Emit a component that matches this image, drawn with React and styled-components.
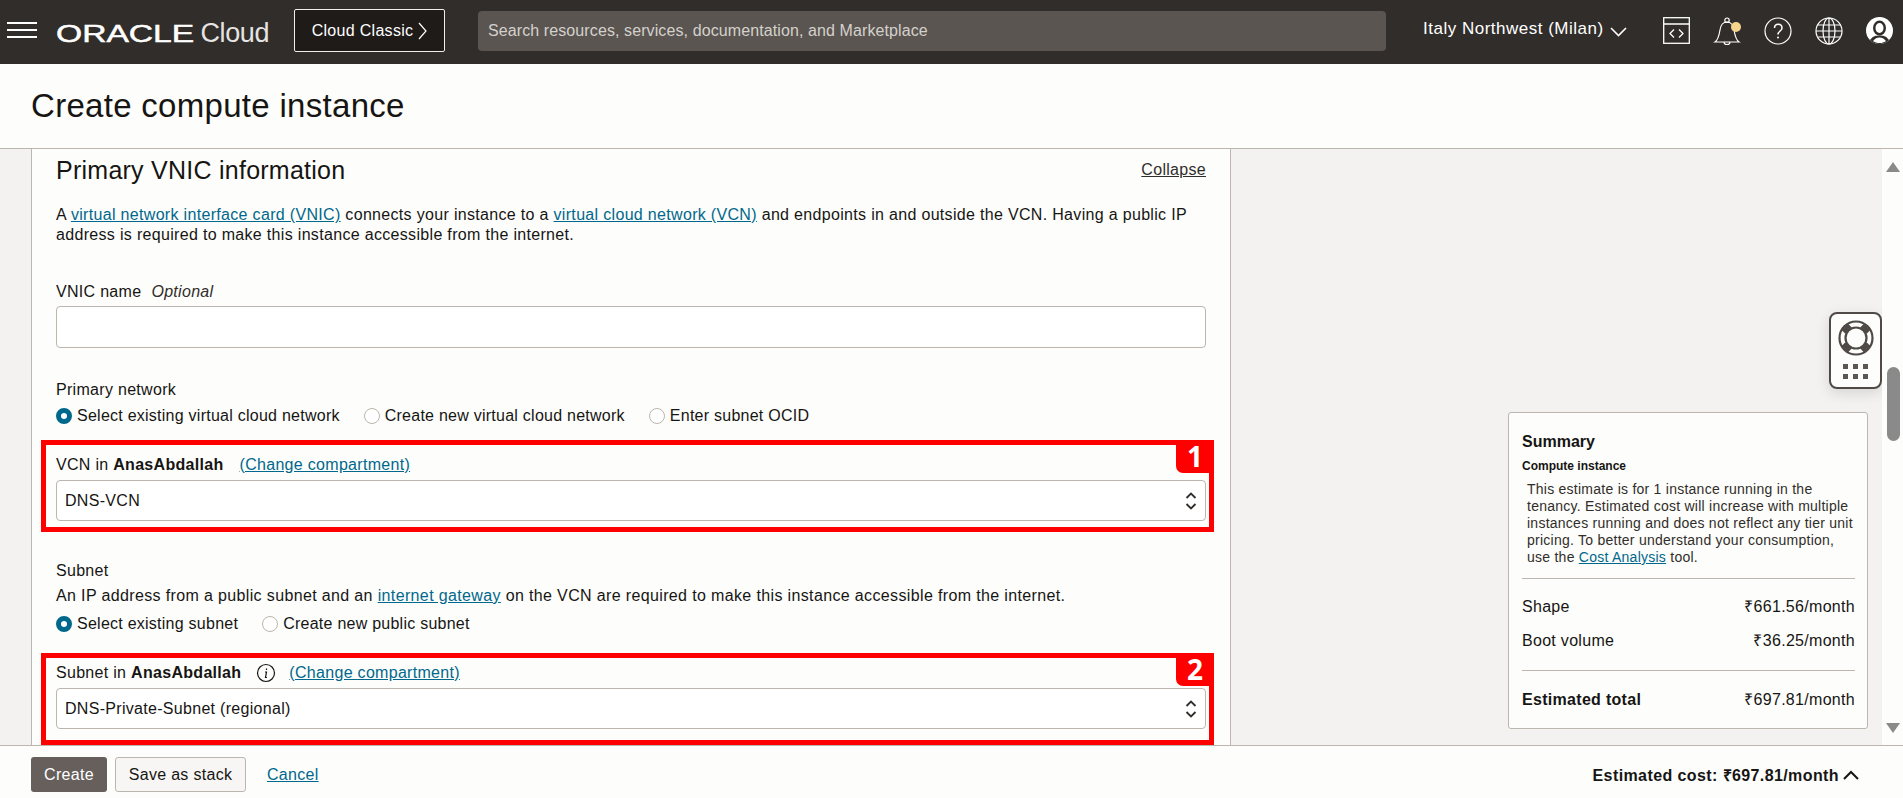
import styled, { createGlobalStyle } from 'styled-components';

const GlobalStyle = createGlobalStyle`
  html, body {
    margin: 0;
    padding: 0;
    height: 100%;
    overflow: hidden;
    background: #fdfdfb;
  }
  body {
    font-family: "Liberation Sans", Arial, sans-serif;
    font-size: 16px;
    letter-spacing: 0.3px;
    color: #161513;
  }
  * { box-sizing: border-box; }
`;

const Page = styled.div`
  width: 1903px;
  height: 798px;
  display: flex;
  flex-direction: column;
  overflow: hidden;
`;

const Header = styled.header`
  height: 64px;
  flex: none;
  background: #312d2a;
  display: flex;
  align-items: center;
  color: #fff;
`;

const MenuButton = styled.svg`
  width: 30px;
  height: 16px;
  margin: 0 0 4px 7px;
  flex: none;
`;

const Logo = styled.div`
  margin: 3px 0 0 19px;
  width: 213px;
  display: flex;
  align-items: baseline;
  white-space: nowrap;
`;

const LogoMark = styled.span`
  display: inline-block;
  width: 139px;
  font-size: 24px;
  letter-spacing: 0;
  transform: scaleX(1.4);
  transform-origin: left center;
  -webkit-text-stroke: 0.5px #fff;
`;

const LogoCloud = styled.span`
  margin-left: 7px;
  font-size: 27px;
  letter-spacing: -0.4px;
  color: #e6e4e2;
`;

const ClassicButton = styled.button`
  margin: 0 0 3px 25px;
  width: 151px;
  height: 43px;
  background: #1e1b18;
  border: 1px solid #f0eeec;
  border-radius: 2px;
  color: #fff;
  font: 400 16px "Liberation Sans", Arial, sans-serif;
  letter-spacing: 0.3px;
  display: flex;
  align-items: center;
  justify-content: center;
  gap: 5px;
`;

const SearchBox = styled.div`
  margin: 0 0 2px 33px;
  width: 908px;
  height: 40px;
  background: #5a5550;
  border-radius: 4px;
  padding-left: 10px;
  display: flex;
  align-items: center;
  letter-spacing: 0.1px;
  color: #d4d1cd;
`;

const Region = styled.div`
  margin-left: 37px;
  display: flex;
  align-items: center;
  gap: 6px;
  white-space: nowrap;
`;

const RegionName = styled.span`
  margin-bottom: 6px;
  font-size: 17px;
  letter-spacing: 0.5px;
`;

const HeaderIcons = styled.div`
  margin: 0 0 3px 36px;
  display: flex;
  align-items: center;
  gap: 23px;
`;

const TitleBar = styled.div`
  height: 85px;
  flex: none;
  border-bottom: 1px solid #bcb6ae;
  padding-left: 31px;
  display: flex;
  align-items: center;
`;

const Title = styled.h1`
  margin: 0;
  font-size: 33px;
  font-weight: 400;
  letter-spacing: 0.3px;
  line-height: 40px;
`;

const Body = styled.div`
  flex: 1;
  display: flex;
  min-height: 0;
  background: #f3f2f0;
  padding-left: 31px;
`;

const Panel = styled.main`
  width: 1200px;
  flex: none;
  background: #fdfdfb;
  border-left: 1px solid #bcb6ae;
  border-right: 1px solid #bcb6ae;
  padding: 7px 24px 0;
  position: relative;
`;

const SectionHead = styled.div`
  display: flex;
  justify-content: space-between;
  align-items: center;
  height: 28px;
  margin-bottom: 21px;
`;

const SectionTitle = styled.h2`
  margin: 0;
  font-size: 25px;
  font-weight: 400;
  letter-spacing: 0.25px;
`;

const TextLink = styled.a`
  color: #00688c;
  text-decoration: underline;
`;

const CollapseLink = styled.a`
  color: #312d2a;
  text-decoration: underline;
`;

const Paragraph = styled.p`
  margin: 0;
  line-height: 20px;
  letter-spacing: 0.32px;
  white-space: nowrap;
`;

const Label = styled.div`
  display: flex;
  align-items: center;
  line-height: 20px;
  margin-top: ${props => props.$top || 0}px;
`;

const HelpLine = styled.p`
  margin: 5px 0 0;
  line-height: 20px;
  letter-spacing: 0.36px;
  white-space: nowrap;
`;

const Optional = styled.i`
  margin-left: 10px;
  color: #312d2a;
`;

const TextInput = styled.div`
  height: 42px;
  margin-top: 4px;
  border: 1px solid #bcb6ae;
  border-radius: 4px;
  background: #fff;
`;

const RadioRow = styled.div`
  display: flex;
  align-items: center;
  gap: 24px;
  margin-top: ${props => props.$top || 0}px;
  height: 20px;
`;

const RadioItem = styled.label`
  display: flex;
  align-items: center;
  gap: 5px;
  letter-spacing: 0.25px;
`;

const RadioDot = styled.span`
  width: 16px;
  height: 16px;
  border-radius: 50%;
  flex: none;
  background: #fff;
  border: ${props => (props.$on ? '5px solid #00688c' : '1px solid #bcb6ae')};
`;

const Marked = styled.section`
  position: relative;
  z-index: 5;
  margin: ${props => props.$top}px -8px 0 -15px;
  height: 92px;
  border: 5px solid #ff0000;
  padding: ${props => props.$pad}px 3px 0 10px;
`;

const Badge = styled.span`
  position: absolute;
  top: -5px;
  right: -5px;
  width: 38px;
  height: 33px;
  background: #ff0000;
  border-bottom-left-radius: 7px;
  color: #fff;
  font: 700 28px/33px "Open Sans", "Liberation Sans", sans-serif;
  letter-spacing: 0;
  text-align: center;
`;

const MarkedLabel = styled(Label)`
  margin-right: 40px;
`;

const ChangeLink = styled(TextLink)`
  margin-left: ${props => props.$left}px;
`;

const InfoIcon = styled.svg`
  margin-left: 15px;
  width: 20px;
  height: 20px;
`;

const SelectBox = styled.div`
  height: 41px;
  margin-top: ${props => props.$top}px;
  border: 1px solid #bcb6ae;
  border-radius: 4px;
  background: #fff;
  padding: 0 8px;
  display: flex;
  align-items: center;
  justify-content: space-between;
`;

const Rail = styled.aside`
  flex: 1;
  position: relative;
  display: flex;
  justify-content: flex-end;
  align-items: flex-end;
  padding: 0 14px 16px 0;
`;

const HelpWidget = styled.div`
  position: absolute;
  top: 163px;
  right: 0;
  width: 53px;
  height: 77px;
  background: #fdfdfb;
  border: 2px solid #4f4a45;
  border-radius: 8px;
  box-shadow: 0 4px 14px rgba(0, 0, 0, 0.12);
  display: flex;
  flex-direction: column;
  align-items: center;
  padding-top: 6px;
  gap: 8px;
`;

const DotGrid = styled.div`
  display: grid;
  grid-template-columns: repeat(3, 5px);
  gap: 5px;
`;

const Dot = styled.span`
  width: 5px;
  height: 5px;
  background: #5a5651;
`;

const SummaryCard = styled.div`
  width: 360px;
  height: 317px;
  background: #fdfdfb;
  border: 1px solid #bcb6ae;
  border-radius: 3px;
  padding: 19px 12px 0 13px;
`;

const SummaryTitle = styled.div`
  font-size: 16px;
  font-weight: 700;
  letter-spacing: 0;
  line-height: 20px;
`;

const SummarySub = styled.div`
  font-size: 12px;
  font-weight: 700;
  letter-spacing: 0;
  line-height: 16px;
  margin-top: 6px;
`;

const SummaryText = styled.p`
  margin: 7px 0 0 5px;
  font-size: 14px;
  letter-spacing: 0.25px;
  line-height: 17px;
  color: #312d2a;
`;

const Divider = styled.hr`
  margin: ${props => props.$top}px 0 0;
  border: 0;
  border-top: 1px solid #bcb6ae;
`;

const CostRow = styled.div`
  display: flex;
  justify-content: space-between;
  line-height: 20px;
  margin-top: ${props => props.$top}px;
`;

const CostName = styled.span`
  font-weight: ${props => (props.$bold ? 700 : 400)};
`;

const Scrollbar = styled.div`
  width: 21px;
  flex: none;
  background: #fdfdfb;
  position: relative;
`;

const ScrollArrow = styled.span`
  position: absolute;
  left: 4px;
  ${props => (props.$down ? 'bottom: 12px;' : 'top: 13px;')}
  width: 0;
  height: 0;
  border-left: 7.5px solid transparent;
  border-right: 7.5px solid transparent;
  ${props => (props.$down ? 'border-top: 10px solid #8a8a8a;' : 'border-bottom: 10px solid #8a8a8a;')}
`;

const ScrollThumb = styled.span`
  position: absolute;
  left: 5px;
  top: 218px;
  width: 13px;
  height: 74px;
  border-radius: 7px;
  background: #8a8a8a;
`;

const Footer = styled.footer`
  height: 53px;
  flex: none;
  border-top: 1px solid #bcb6ae;
  background: #fdfdfb;
  padding: 5px 44px 0 31px;
  display: flex;
  align-items: center;
`;

const PrimaryButton = styled.button`
  width: 76px;
  height: 35px;
  background: #665f5b;
  color: #fff;
  border: 0;
  border-radius: 3px;
  font: 400 16px "Liberation Sans", Arial, sans-serif;
  letter-spacing: 0.3px;
`;

const SecondaryButton = styled.button`
  margin-left: 8px;
  width: 131px;
  height: 35px;
  background: #f7f6f4;
  color: #161513;
  border: 1px solid #bcb6ae;
  border-radius: 3px;
  font: 400 16px "Liberation Sans", Arial, sans-serif;
  letter-spacing: 0.3px;
`;

const CancelLink = styled(TextLink)`
  margin-left: 21px;
`;

const EstimatedCost = styled.div`
  margin-left: auto;
  display: flex;
  align-items: center;
  gap: 4px;
  font-weight: 700;
  letter-spacing: 0.4px;
`;

const Chevron = ({ d, w = 17, h = 10, sw = 1.6 }) => (
  <svg width={w} height={h} viewBox={`0 0 ${w} ${h}`} fill="none" stroke="currentColor" strokeWidth={sw}>
    <path d={d} />
  </svg>
);

const UpDown = () => (
  <svg width="12" height="20" viewBox="0 0 12 20" fill="none" stroke="#312d2a" strokeWidth="1.8">
    <path d="M1.5 7 6 2.5 10.5 7M1.5 13 6 17.5 10.5 13" />
  </svg>
);

const TerminalIcon = () => (
  <svg width="27" height="27" viewBox="0 0 27 27" fill="none" stroke="#fff" strokeWidth="1.3">
    <rect x="0.7" y="0.7" width="25.6" height="25.6" />
    <path d="M0.7 7h25.6M11 12.5 7 16.5l4 4M16 12.5l4 4-4 4" />
  </svg>
);

const BellIcon = () => (
  <svg width="28" height="28" viewBox="0 0 28 28" fill="none" stroke="#fff" strokeWidth="1.2">
    <path d="M2 25h24c-3-2-4-6-5-12-.7-5-3.500-8-7-8s-6.300 3-7 8c-1 6-2 10-5 12Z" />
    <circle cx="14" cy="3.200" r="2.200" />
    <path d="M11 25c0 3.500 6 3.500 6 0" />
    <circle cx="23" cy="10" r="5" fill="#f5d58c" stroke="none" />
  </svg>
);

const HelpIcon = () => (
  <svg width="28" height="28" viewBox="0 0 28 28" fill="none" stroke="#fff" strokeWidth="1.2">
    <circle cx="14" cy="14" r="13" />
    <path d="M10.500 11c0-5 7.500-5 7.500 0 0 3-4 3-4 6.500" strokeWidth="1.5" />
    <circle cx="14" cy="20.500" r="1" fill="#fff" stroke="none" />
  </svg>
);

const GlobeIcon = () => (
  <svg width="28" height="28" viewBox="0 0 28 28" fill="none" stroke="#fff" strokeWidth="1.2">
    <circle cx="14" cy="14" r="13" />
    <ellipse cx="14" cy="14" rx="6" ry="13" />
    <path d="M14 1v26M1 14h26M3 8h22M3 20h22" />
  </svg>
);

const AvatarIcon = () => (
  <svg width="27" height="27" viewBox="0 0 27 27">
    <circle cx="13.500" cy="13.500" r="13.500" fill="#fff" />
    <ellipse cx="13.500" cy="11" rx="6.500" ry="7.500" fill="#312d2a" />
    <ellipse cx="13.500" cy="11" rx="4" ry="5" fill="#fff" />
    <path d="M4 23c3-4 6-4.500 9.500-4.500S20 19 23 23c-2.500 2.500-6 4-9.500 4S6.500 25.500 4 23Z" fill="#312d2a" />
    <path d="M7 24c2-2.500 4-3.500 6.500-3.500S18 21.500 20 24c-2 1.500-4 2-6.500 2S9 25.500 7 24Z" fill="#fff" />
  </svg>
);

const LifeRing = () => (
  <svg width="36" height="36" viewBox="0 0 36 36" fill="none" stroke="#4f4a45">
    <circle cx="18" cy="18" r="16.500" strokeWidth="2.200" />
    <circle cx="18" cy="18" r="10.500" strokeWidth="2.200" />
    <path d="M10.600 10.600 6.700 6.700M25.400 10.600l3.900-3.900M10.600 25.400l-3.900 3.900M25.400 25.400l3.900 3.900" strokeWidth="9" />
  </svg>
);

const costs = [
  { name: 'Shape', value: '₹661.56/month', top: 18 },
  { name: 'Boot volume', value: '₹36.25/month', top: 14 },
];

export default function App() {
  return (
    <Page>
      <GlobalStyle />
      <Header>
        <MenuButton viewBox="0 0 30 16" stroke="#fff" strokeWidth="2">
          <path d="M0 1h30M0 8h30M0 15h30" />
        </MenuButton>
        <Logo>
          <LogoMark>ORACLE</LogoMark>
          <LogoCloud>Cloud</LogoCloud>
        </Logo>
        <ClassicButton>
          Cloud Classic
          <Chevron w={9} h={18} d="M1 1l7 8-7 8" sw={1.2} />
        </ClassicButton>
        <SearchBox>Search resources, services, documentation, and Marketplace</SearchBox>
        <Region>
          <RegionName>Italy Northwest (Milan)</RegionName>
          <Chevron d="M1 1l7.500 7.500L16 1" />
        </Region>
        <HeaderIcons>
          <TerminalIcon />
          <BellIcon />
          <HelpIcon />
          <GlobeIcon />
          <AvatarIcon />
        </HeaderIcons>
      </Header>

      <TitleBar>
        <Title>Create compute instance</Title>
      </TitleBar>

      <Body>
        <Panel>
          <SectionHead>
            <SectionTitle>Primary VNIC information</SectionTitle>
            <CollapseLink>Collapse</CollapseLink>
          </SectionHead>
          <Paragraph>
            A <TextLink>virtual network interface card (VNIC)</TextLink> connects your instance to a{' '}
            <TextLink>virtual cloud network (VCN)</TextLink> and endpoints in and outside the VCN. Having a public IP
            <br />
            address is required to make this instance accessible from the internet.
          </Paragraph>

          <Label $top={37}>VNIC name<Optional>Optional</Optional></Label>
          <TextInput />

          <Label $top={32}>Primary network</Label>
          <RadioRow $top={6}>
            <RadioItem><RadioDot $on />Select existing virtual cloud network</RadioItem>
            <RadioItem><RadioDot />Create new virtual cloud network</RadioItem>
            <RadioItem><RadioDot />Enter subnet OCID</RadioItem>
          </RadioRow>

          <Marked $top={14} $pad={10}>
            <Badge>1</Badge>
            <MarkedLabel>
              VCN in&nbsp;<b>AnasAbdallah</b>
              <ChangeLink $left={16}>(Change compartment)</ChangeLink>
            </MarkedLabel>
            <SelectBox $top={5}>DNS-VCN<UpDown /></SelectBox>
          </Marked>

          <Label $top={29}>Subnet</Label>
          <HelpLine>
            An IP address from a public subnet and an <TextLink>internet gateway</TextLink> on the VCN are required to make this instance accessible from the internet.
          </HelpLine>
          <RadioRow $top={8}>
            <RadioItem><RadioDot $on />Select existing subnet</RadioItem>
            <RadioItem><RadioDot />Create new public subnet</RadioItem>
          </RadioRow>

          <Marked $top={19} $pad={5}>
            <Badge>2</Badge>
            <MarkedLabel>
              Subnet in&nbsp;<b>AnasAbdallah</b>
              <InfoIcon viewBox="0 0 20 20" fill="none" stroke="#161513" strokeWidth="1.200">
                <circle cx="10" cy="10" r="8.500" />
                <path d="M10.500 5.500v1.500M9 9h1.500L9.500 14.500H11" />
              </InfoIcon>
              <ChangeLink $left={13}>(Change compartment)</ChangeLink>
            </MarkedLabel>
            <SelectBox $top={5}>DNS-Private-Subnet (regional)<UpDown /></SelectBox>
          </Marked>
        </Panel>

        <Rail>
          <HelpWidget>
            <LifeRing />
            <DotGrid>
              {[0, 1, 2, 3, 4, 5].map(i => <Dot key={i} />)}
            </DotGrid>
          </HelpWidget>
          <SummaryCard>
            <SummaryTitle>Summary</SummaryTitle>
            <SummarySub>Compute instance</SummarySub>
            <SummaryText>
              This estimate is for 1 instance running in the tenancy. Estimated cost will increase with multiple
              instances running and does not reflect any tier unit pricing. To better understand your consumption,
              use the <TextLink>Cost Analysis</TextLink> tool.
            </SummaryText>
            <Divider $top={12} />
            {costs.map(c => (
              <CostRow key={c.name} $top={c.top}>
                <CostName>{c.name}</CostName>
                <span>{c.value}</span>
              </CostRow>
            ))}
            <Divider $top={19} />
            <CostRow $top={19}>
              <CostName $bold>Estimated total</CostName>
              <span>₹697.81/month</span>
            </CostRow>
          </SummaryCard>
        </Rail>

        <Scrollbar>
          <ScrollArrow />
          <ScrollThumb />
          <ScrollArrow $down />
        </Scrollbar>
      </Body>

      <Footer>
        <PrimaryButton>Create</PrimaryButton>
        <SecondaryButton>Save as stack</SecondaryButton>
        <CancelLink>Cancel</CancelLink>
        <EstimatedCost>
          Estimated cost: ₹697.81/month
          <Chevron w={16} h={10} d="M1 9l7-7 7 7" sw={2} />
        </EstimatedCost>
      </Footer>
    </Page>
  );
}
